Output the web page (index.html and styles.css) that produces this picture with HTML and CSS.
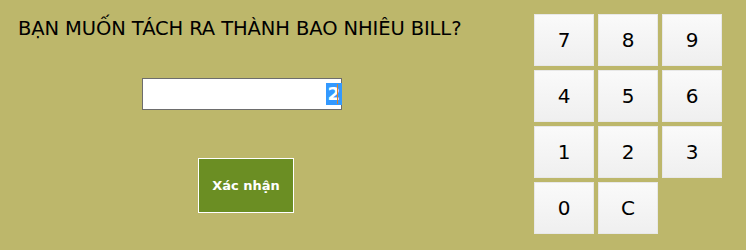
FILE: index.html
```html
<!DOCTYPE html>
<html lang="vi">
<head>
    <meta charset="UTF-8">
    <title>Tách bill</title>
    <link rel="stylesheet" href="styles.css">
</head>
<body>
    <div class="split-screen">
        <!-- Left side: question, number field, confirm -->
        <div class="split-form">
            <div class="split-title">BẠN MUỐN TÁCH RA THÀNH BAO NHIÊU BILL?</div>
            <div class="split-input"><span class="split-value">2</span><span class="caret"></span></div>
            <button class="confirm-button">Xác nhận</button>
        </div>

        <!-- Right side: number pad -->
        <div class="num-pad">
            <button class="num-key">7</button>
            <button class="num-key">8</button>
            <button class="num-key">9</button>
            <button class="num-key">4</button>
            <button class="num-key">5</button>
            <button class="num-key">6</button>
            <button class="num-key">1</button>
            <button class="num-key">2</button>
            <button class="num-key">3</button>
            <button class="num-key">0</button>
            <button class="num-key">C</button>
        </div>
    </div>
</body>
</html>
```

FILE: styles.css
```css
/* Page background */
body {
    margin: 0;
    background: #bdb76b;
    font-family: "DejaVu Sans", sans-serif;
    width: 746px;
    height: 250px;
    overflow: hidden;
}

.split-screen {
    display: flex;
    align-items: flex-start;
}

/* Left column */
.split-form {
    width: 534px;
    display: flex;
    flex-direction: column;
}

.split-title {
    font-size: 19.5px;
    color: #000;
    margin: 17px 0 0 18px;
    line-height: 24px;
    white-space: nowrap;
    letter-spacing: -0.1px;
}

.split-input {
    width: 198px;
    height: 30px;
    border: 1px solid #6d6d6d;
    background: #fff;
    margin: 37px 0 0 142px;
    display: flex;
    justify-content: flex-end;
    align-items: center;
}

.split-value {
    background: #3399ff;
    color: #fff;
    font-size: 18px;
    font-weight: bold;
    line-height: 22px;
    padding: 0 2px 0 1px;
}

.caret {
    width: 1px;
    height: 20px;
    background: #d9822b;
    margin: 0 3px 0 -5px;
}

.confirm-button {
    width: 96px;
    height: 55px;
    margin: 48px 0 0 198px;
    background: #6b8e23;
    border: 1px solid #fff;
    color: #fff;
    font-family: inherit;
    font-size: 13px;
    font-weight: bold;
    padding: 0;
}

/* Number pad */
.num-pad {
    display: grid;
    grid-template-columns: repeat(3, 60px);
    grid-auto-rows: 52px;
    gap: 4px;
    margin-top: 14px;
}

.num-key {
    background: linear-gradient(#fafafa, #efefef);
    border: 1px solid #e8e8e8;
    font-family: inherit;
    font-size: 20px;
    color: #000;
    padding: 0;
}
```
